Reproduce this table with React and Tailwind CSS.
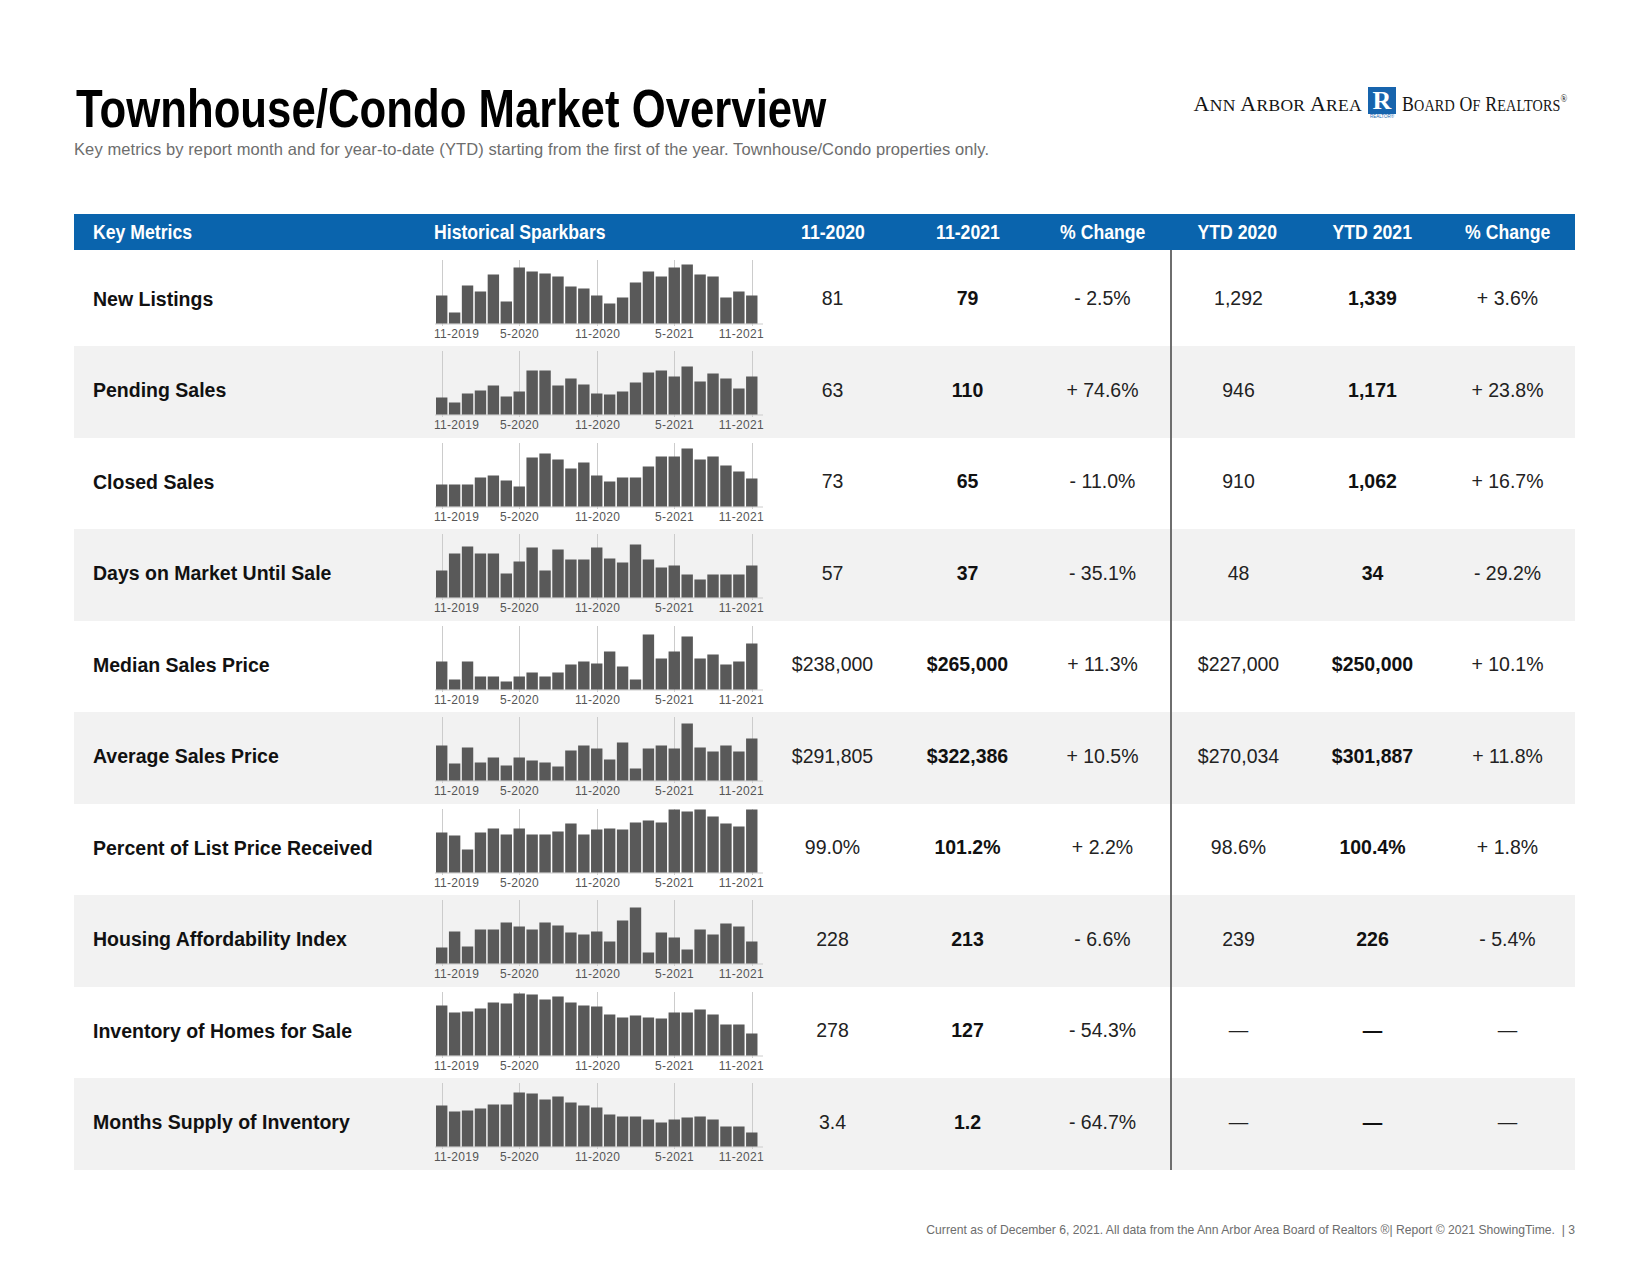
import React from "react";

const rows = [
  { name: "New Listings", a: "81", b: "79", c: "- 2.5%", d: "1,292", e: "1,339", f: "+ 3.6%", bars: [28, 11, 38, 32, 49, 22, 56, 52, 50, 47, 37, 35, 28, 20, 26, 41, 52, 47, 56, 59, 49, 47, 26, 32, 28] },
  { name: "Pending Sales", a: "63", b: "110", c: "+ 74.6%", d: "946", e: "1,171", f: "+ 23.8%", bars: [17, 12, 21, 24, 29, 18, 23, 44, 44, 29, 36, 30, 21, 20, 23, 32, 42, 44, 38, 48, 33, 41, 36, 26, 38] },
  { name: "Closed Sales", a: "73", b: "65", c: "- 11.0%", d: "910", e: "1,062", f: "+ 16.7%", bars: [22, 22, 22, 29, 31, 26, 20, 49, 53, 47, 38, 44, 31, 25, 29, 29, 40, 50, 50, 58, 47, 50, 41, 35, 28] },
  { name: "Days on Market Until Sale", a: "57", b: "37", c: "- 35.1%", d: "48", e: "34", f: "- 29.2%", bars: [27, 44, 51, 44, 44, 24, 36, 50, 27, 48, 38, 38, 50, 39, 35, 53, 38, 30, 32, 23, 18, 23, 23, 23, 32] },
  { name: "Median Sales Price", a: "$238,000", b: "$265,000", c: "+ 11.3%", d: "$227,000", e: "$250,000", f: "+ 10.1%", bars: [28, 10, 28, 13, 13, 8, 13, 17, 13, 17, 25, 28, 26, 38, 23, 10, 55, 31, 38, 53, 31, 35, 25, 28, 46] },
  { name: "Average Sales Price", a: "$291,805", b: "$322,386", c: "+ 10.5%", d: "$270,034", e: "$301,887", f: "+ 11.8%", bars: [35, 17, 33, 18, 23, 15, 23, 20, 18, 14, 30, 35, 32, 21, 38, 12, 32, 35, 32, 57, 33, 29, 35, 29, 42] },
  { name: "Percent of List Price Received", a: "99.0%", b: "101.2%", c: "+ 2.2%", d: "98.6%", e: "100.4%", f: "+ 1.8%", bars: [40, 37, 23, 40, 44, 38, 44, 38, 38, 41, 49, 38, 43, 44, 43, 50, 52, 50, 63, 61, 63, 56, 49, 46, 63] },
  { name: "Housing Affordability Index", a: "228", b: "213", c: "- 6.6%", d: "239", e: "226", f: "- 5.4%", bars: [16, 32, 17, 34, 34, 41, 37, 34, 41, 38, 31, 29, 32, 22, 43, 56, 11, 31, 26, 14, 34, 29, 40, 37, 22] },
  { name: "Inventory of Homes for Sale", a: "278", b: "127", c: "- 54.3%", d: "—", e: "—", f: "—", bars: [50, 43, 44, 47, 53, 52, 62, 61, 56, 59, 53, 50, 49, 41, 38, 40, 38, 37, 43, 43, 46, 41, 31, 31, 22] },
  { name: "Months Supply of Inventory", a: "3.4", b: "1.2", c: "- 64.7%", d: "—", e: "—", f: "—", bars: [41, 35, 36, 38, 42, 42, 54, 53, 47, 50, 44, 41, 39, 32, 30, 30, 27, 24, 27, 29, 30, 27, 20, 20, 14] },
];

const PITCH = 12.92;
const BAR_W = 11.4;
const BASE = 63.5;

const Spark = ({ bars }) => {
  const cx = (i) => Math.round(2 + i * PITCH + BAR_W / 2) + 0.5;
  return (
    <svg width="331" height="85" className="block">
      {[0, 6, 12, 18, 24].map((i) => (
        <line key={i} x1={cx(i)} x2={cx(i)} y1={0} y2={66} stroke="#cccccc" strokeWidth="1" />
      ))}
      <line x1={1} x2={329} y1={BASE + 0.5} y2={BASE + 0.5} stroke="#cccccc" strokeWidth="1" />
      {bars.map((h, i) => (
        <rect key={i} x={2 + i * PITCH} y={BASE - h} width={BAR_W} height={h} fill="#595959" />
      ))}
      <g fontFamily="'Liberation Sans', Arial, sans-serif" fontSize="12" letterSpacing="0.3" fill="#555555">
        <text x={0} y={78} textAnchor="start">11-2019</text>
        <text x={cx(6)} y={78} textAnchor="middle">5-2020</text>
        <text x={cx(12)} y={78} textAnchor="middle">11-2020</text>
        <text x={cx(18)} y={78} textAnchor="middle">5-2021</text>
        <text x={330} y={78} textAnchor="end">11-2021</text>
      </g>
    </svg>
  );
};

const Cell = ({ children, bold, divider }) => (
  <div
    className={`w-[135px] flex items-center justify-center pb-[3px] text-[19.5px] ${
      bold ? "font-bold text-[#111]" : "text-[#222]"
    } ${divider ? "border-l-2 border-[#6e6e6e]" : ""}`}
  >
    {children}
  </div>
);

const Head = ({ children, left }) => (
  <div className={left ? "" : "w-[135px] text-center"}>
    <span className={`inline-block scale-x-[0.84] ${left ? "origin-left" : "origin-center"}`}>{children}</span>
  </div>
);

const Logo = () => (
  <div className="flex items-start mt-[6px] pr-[4px] text-[#141414] font-['Liberation_Serif','Times_New_Roman',serif]">
    <span className="mt-[5.5px] text-[22px] leading-none tracking-[0.3px] whitespace-nowrap">
      A<span className="text-[17.5px]">NN</span> A<span className="text-[17.5px]">RBOR</span> A<span className="text-[17.5px]">REA</span>
    </span>
    <div className="ml-[6px] mr-[6px] flex flex-col items-center">
      <div className="w-[28px] h-[27px] bg-[#1764ad] flex items-center justify-center text-white font-bold text-[26px] leading-none">
        R
      </div>
      <span className="mt-[1px] text-[4.5px] leading-none text-[#1764ad] font-['Liberation_Sans',sans-serif]">REALTOR®</span>
    </div>
    <div className="w-[169px] mt-[5.5px]">
      <span className="inline-block origin-left scale-x-[0.81] text-[22px] leading-none tracking-[0.2px] whitespace-nowrap">
        B<span className="text-[17.5px]">OARD</span> O<span className="text-[17.5px]">F</span> R<span className="text-[17.5px]">EALTORS</span>
        <span className="text-[11px] align-top">®</span>
      </span>
    </div>
  </div>
);

export default function App() {
  return (
    <div className="w-[1650px] h-[1275px] bg-white pl-[74px] pr-[75px] font-['Liberation_Sans',Arial,sans-serif]">
      <div className="flex items-start justify-between pt-[81px]">
        <div>
          <h1 className="ml-[2px] origin-left scale-x-[0.81] whitespace-nowrap font-bold text-[54px] leading-[54px] text-black">
            Townhouse/Condo Market Overview
          </h1>
          <p className="mt-[4px] text-[16.5px] leading-[20px] tracking-[0.1px] text-[#6d6d6d] whitespace-nowrap">
            Key metrics by report month and for year-to-date (YTD) starting from the first of the year. Townhouse/Condo properties only.
          </p>
        </div>
        <Logo />
      </div>

      <div className="mt-[54.5px] w-[1501px]">
        <div className="flex h-[36px] items-center bg-[#0a64ad] text-white font-bold text-[21px] pt-[1px]">
          <div className="w-[360px] pl-[19px]">
            <Head left>Key Metrics</Head>
          </div>
          <div className="w-[331px]">
            <Head left>Historical Sparkbars</Head>
          </div>
          <Head>11-2020</Head>
          <Head>11-2021</Head>
          <Head>% Change</Head>
          <Head>YTD 2020</Head>
          <Head>YTD 2021</Head>
          <Head>% Change</Head>
        </div>
        <div className="h-[5px] pl-[1096px]">
          <div className="h-full w-[2px] bg-[#6e6e6e]" />
        </div>
        {rows.map((r, i) => (
          <div key={r.name} className={`flex h-[91.5px] ${i % 2 ? "bg-[#f2f2f2]" : "bg-white"}`}>
            <div className="w-[360px] pl-[19px] pb-[2px] flex items-center text-[19.5px] font-bold text-[#111]">
              {r.name}
            </div>
            <div className="w-[331px] pt-[5px]">
              <Spark bars={r.bars} />
            </div>
            <Cell>{r.a}</Cell>
            <Cell bold>{r.b}</Cell>
            <Cell>{r.c}</Cell>
            <Cell divider>{r.d}</Cell>
            <Cell bold>{r.e}</Cell>
            <Cell>{r.f}</Cell>
          </div>
        ))}
      </div>

      <p className="mt-[53px] text-right text-[12.15px] leading-[14px] text-[#6d6d6d]">
        Current as of December 6, 2021. All data from the Ann Arbor Area Board of Realtors ®| Report © 2021 ShowingTime.&nbsp; | 3
      </p>
    </div>
  );
}
